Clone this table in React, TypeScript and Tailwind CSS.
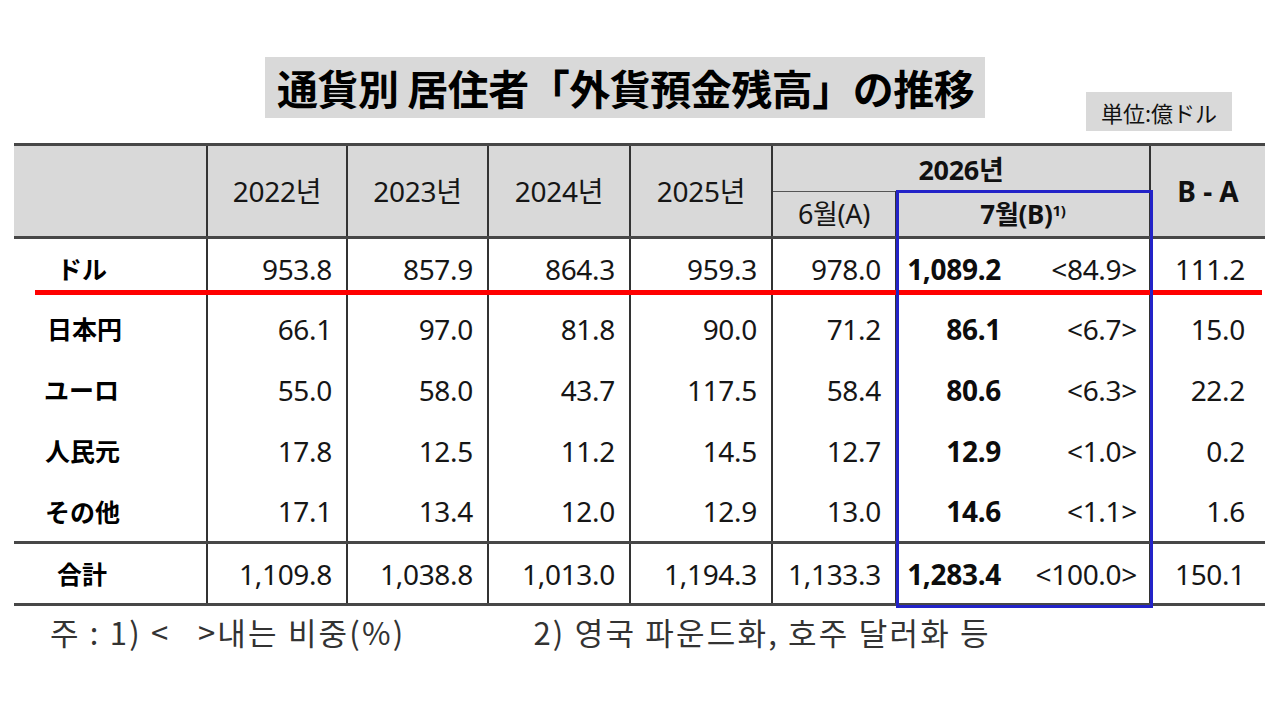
import React from "react";

const NUM = { fontFamily: '"Noto Sans", "Noto Sans CJK KR", sans-serif' } as const;
const JP = { fontFamily: '"Noto Sans CJK JP", "Noto Sans", sans-serif' } as const;
const KR = { fontFamily: '"Noto Sans CJK KR", "Noto Sans", sans-serif' } as const;

type Row = { label: string; pl: string; vals: string[]; b: string; share: string; diff: string };

const rows: Row[] = [
  { label: "ドル", pl: "pl-[43px]", vals: ["953.8", "857.9", "864.3", "959.3", "978.0"], b: "1,089.2", share: "<84.9>", diff: "111.2" },
  { label: "日本円", pl: "pl-[33px]", vals: ["66.1", "97.0", "81.8", "90.0", "71.2"], b: "86.1", share: "<6.7>", diff: "15.0" },
  { label: "ユーロ", pl: "pl-[30px]", vals: ["55.0", "58.0", "43.7", "117.5", "58.4"], b: "80.6", share: "<6.3>", diff: "22.2" },
  { label: "人民元", pl: "pl-[31px]", vals: ["17.8", "12.5", "11.2", "14.5", "12.7"], b: "12.9", share: "<1.0>", diff: "0.2" },
  { label: "その他", pl: "pl-[31px]", vals: ["17.1", "13.4", "12.0", "12.9", "13.0"], b: "14.6", share: "<1.1>", diff: "1.6" },
];

const total: Row = {
  label: "合計",
  pl: "pl-[43px]",
  vals: ["1,109.8", "1,038.8", "1,013.0", "1,194.3", "1,133.3"],
  b: "1,283.4",
  share: "<100.0>",
  diff: "150.1",
};

function BodyRow({ r, isTotal }: { r: Row; isTotal?: boolean }) {
  const rowCls = isTotal ? "h-[62px] border-t-[3px] border-b-[3px] border-[#474747]" : "h-[61px]";
  return (
    <tr className={rowCls}>
      <td className={`${r.pl} text-left text-[25px] font-bold text-black`} style={JP}>
        {r.label}
      </td>
      {r.vals.map((v, i) => (
        <td key={i} className="border-l-2 border-[#333] pr-[14px] text-right text-[28px] tracking-[-0.3px] text-[#161616]" style={NUM}>
          {v}
        </td>
      ))}
      <td className="border-l-2 border-[#333] text-[28px] tracking-[-0.3px] text-[#161616]" style={NUM}>
        <div className="flex items-center">
          <span className="w-[104px] text-right font-bold text-[#0d0d0d]">{r.b}</span>
          <span className="flex-1 pr-[12px] text-right">{r.share}</span>
        </div>
      </td>
      <td className="border-l-2 border-[#333] pr-[20px] text-right text-[28px] tracking-[-0.3px] text-[#161616]" style={NUM}>
        {r.diff}
      </td>
    </tr>
  );
}

export default function App() {
  return (
    <div className="relative h-[720px] w-[1280px] overflow-hidden bg-white pt-[57px]">
      <div className="flex items-start">
        <div className="ml-[265px] flex h-[61px] w-[720px] items-center bg-[#d9d9d9] pl-[12px]">
          <span className="text-[41px] font-bold leading-none tracking-[-0.5px] text-black" style={JP}>
            通貨別 居住者「外貨預金残高」の推移
          </span>
        </div>
        <div className="ml-[101px] mt-[35px] flex h-[39px] w-[146px] items-center justify-center bg-[#d9d9d9]">
          <span className="text-[22px] leading-none text-[#111]" style={JP}>
            単位:億ドル
          </span>
        </div>
      </div>

      <div className="relative ml-[14px] mt-[12px] w-[1251px]">
        <table className="w-[1251px] table-fixed border-collapse">
          <colgroup>
            <col className="w-[193px]" />
            <col className="w-[140px]" />
            <col className="w-[141px]" />
            <col className="w-[142px]" />
            <col className="w-[142px]" />
            <col className="w-[124px]" />
            <col className="w-[254px]" />
            <col className="w-[115px]" />
          </colgroup>
          <thead className="bg-[#d9d9d9]">
            <tr className="h-[47px] border-t-[3px] border-[#474747]">
              <th rowSpan={2} className="border-b-[3px] border-[#474747]" />
              {["2022년", "2023년", "2024년", "2025년"].map((y) => (
                <th
                  key={y}
                  rowSpan={2}
                  className="border-b-[3px] border-l-2 border-[#333] border-b-[#474747] text-center text-[28px] font-normal tracking-[-0.3px] text-[#161616]"
                  style={NUM}
                >
                  {y}
                </th>
              ))}
              <th
                colSpan={2}
                className="border-b-[1.5px] border-l-2 border-[#333] border-b-[#555] pt-[4px] text-center text-[27px] font-bold tracking-[-0.3px] text-[#111]"
                style={NUM}
              >
                2026년
              </th>
              <th
                rowSpan={2}
                className="border-b-[3px] border-l-2 border-[#333] border-b-[#474747] text-center text-[28px] font-bold text-[#111]"
                style={NUM}
              >
                B - A
              </th>
            </tr>
            <tr className="h-[46px]">
              <th
                className="border-b-[3px] border-l-2 border-[#333] border-b-[#474747] text-center text-[27px] font-normal tracking-[-0.3px] text-[#161616]"
                style={NUM}
              >
                6월(A)
              </th>
              <th
                className="border-b-[3px] border-l-2 border-[#333] border-b-[#474747] text-center text-[26px] font-bold tracking-[-0.3px] text-[#111]"
                style={NUM}
              >
                7월(B)<sup className="text-[15px]">1)</sup>
              </th>
            </tr>
          </thead>
          <tbody>
            {rows.map((r) => (
              <BodyRow key={r.label} r={r} />
            ))}
            <BodyRow r={total} isTotal />
          </tbody>
        </table>

        <div className="pointer-events-none absolute left-[21px] top-[147px] h-[5px] w-[1227px] bg-[#ff0000]" />
        <div className="pointer-events-none absolute left-[882px] top-[47px] h-[418px] w-[257px] border-[3px] border-[#2323c8]" />

        <div className="flex items-center pt-[4px] text-[31px] leading-[44px] tracking-[2.2px] text-[#333]" style={KR}>
          <span className="ml-[36px] whitespace-pre">주 : 1) {"<"}   {">"}내는 비중(%)</span>
          <span className="ml-[128px] whitespace-pre">2) 영국 파운드화, 호주 달러화 등</span>
        </div>
      </div>
    </div>
  );
}
